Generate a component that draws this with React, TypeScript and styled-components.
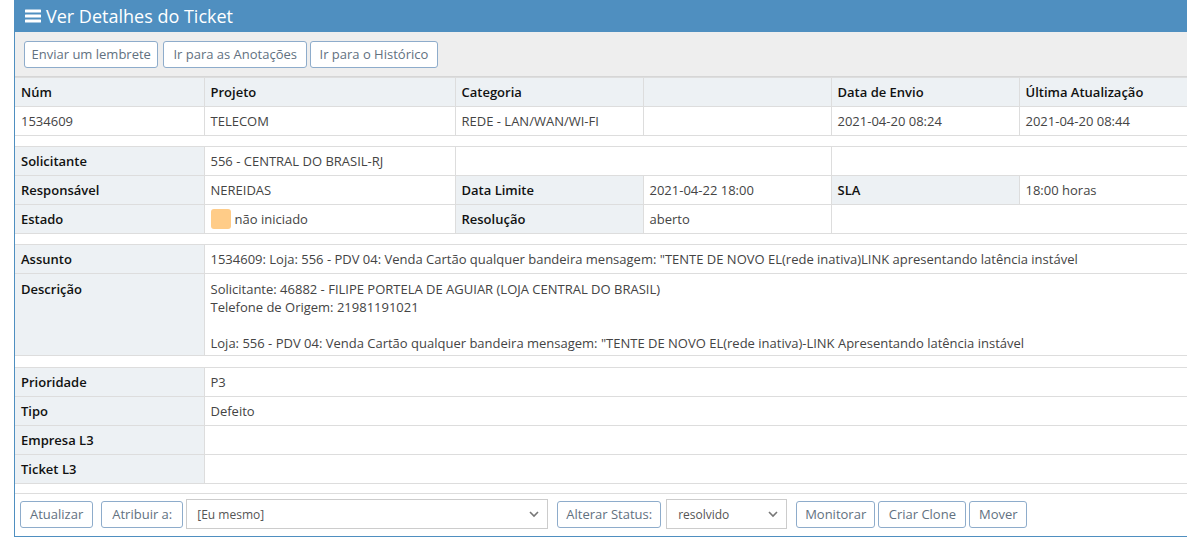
import React from 'react';
import styled, { createGlobalStyle } from 'styled-components';

const GlobalStyle = createGlobalStyle`
  html, body {
    margin: 0;
    padding: 0;
    background: #ffffff;
    overflow: hidden;
  }
  body {
    font-family: "Open Sans", "Noto Sans", Arial, sans-serif;
    font-size: 13px;
    color: #444;
  }
`;

const Page = styled.div`
  padding-left: 14px;
  width: 1220px;
`;

const Panel = styled.div`
  border-left: 1px solid #4f8fc0;
  border-bottom: 1px solid #4f8fc0;
  background: #fff;
`;

const Header = styled.div`
  height: 32px;
  background: #4f8fc0;
  color: #fff;
  display: flex;
  align-items: center;
  padding-left: 10px;
  font-size: 18px;
  gap: 5px;
`;

const Toolbar = styled.div`
  height: 45px;
  box-sizing: border-box;
  background: #eeeeee;
  border-bottom: 1px solid #d6d6d6;
  display: flex;
  align-items: center;
  padding-left: 9px;
`;

const Button = styled.button<{ $ml?: number; $px?: number }>`
  height: 27px;
  margin-left: ${({ $ml }) => $ml ?? 0}px;
  padding: 0 ${({ $px }) => $px ?? 8.5}px;
  background: #fff;
  border: 1px solid #8eaccb;
  border-radius: 3px;
  color: #62717f;
  font-family: "Open Sans", "Noto Sans", Arial, sans-serif;
  font-size: 13px;
  line-height: 1;
  white-space: nowrap;
  cursor: pointer;
`;

const Block = styled.table<{ $mt?: number }>`
  width: 100%;
  border-collapse: collapse;
  table-layout: fixed;
  margin-top: ${({ $mt }) => $mt ?? 0}px;
`;

const Cell = styled.td<{ $label?: boolean; $tall?: boolean }>`
  height: 28px;
  padding: ${({ $tall }) => ($tall ? '6px 6px 3px' : '0 6px')};
  border: 1px solid #dddddd;
  background: ${({ $label }) => ($label ? '#edf1f4' : '#fff')};
  color: ${({ $label }) => ($label ? '#111' : '#444')};
  font-weight: ${({ $label }) => ($label ? 600 : 400)};
  font-size: 13px;
  line-height: 18px;
  vertical-align: ${({ $tall }) => ($tall ? 'top' : 'middle')};
  white-space: nowrap;
  box-sizing: content-box;

  &:first-child {
    border-left: none;
  }
`;

const Swatch = styled.span`
  display: inline-block;
  width: 20px;
  height: 20px;
  border-radius: 3px;
  background: #ffcc88;
  vertical-align: -5px;
  margin-right: 4px;
`;

const Footer = styled.div`
  margin-top: 9px;
  border-top: 1px solid #dddddd;
  padding: 5px 0 7px 5px;
  display: flex;
  align-items: center;
`;

const SelectWrap = styled.div<{ $w: number; $ml: number }>`
  position: relative;
  width: ${({ $w }) => $w}px;
  margin-left: ${({ $ml }) => $ml}px;
  height: 30px;
`;

const Select = styled.select<{ $pl: number }>`
  appearance: none;
  width: 100%;
  height: 100%;
  border: 1px solid #cccccc;
  background: #fff;
  padding: 0 0 0 ${({ $pl }) => $pl}px;
  font-family: "Open Sans", "Noto Sans", Arial, sans-serif;
  font-size: 12px;
  color: #555;
  border-radius: 0;
`;

const Chevron = styled.svg`
  position: absolute;
  right: 9px;
  top: 12px;
  pointer-events: none;
`;

const Cols = () => (
  <colgroup>
    <col style={{ width: 189 }} />
    <col style={{ width: 251 }} />
    <col style={{ width: 188 }} />
    <col style={{ width: 188 }} />
    <col style={{ width: 188 }} />
    <col />
  </colgroup>
);

const Dropdown = ({ w, ml, pl, value }: { w: number; ml: number; pl: number; value: string }) => (
  <SelectWrap $w={w} $ml={ml}>
    <Select $pl={pl} defaultValue={value}>
      <option>{value}</option>
    </Select>
    <Chevron width="10" height="7" viewBox="0 0 10 7">
      <path d="M1 1l4 4 4-4" fill="none" stroke="#777" strokeWidth="1.6" />
    </Chevron>
  </SelectWrap>
);

const App = () => {
  return (
    <Page>
      <GlobalStyle />
      <Panel>
        <Header>
          <svg width="16" height="14" viewBox="0 0 16 14">
            <rect x="0" y="0.5" width="16" height="3" rx="0.5" fill="#fff" />
            <rect x="0" y="5.5" width="16" height="3" rx="0.5" fill="#fff" />
            <rect x="0" y="10.5" width="16" height="3" rx="0.5" fill="#fff" />
          </svg>
          Ver Detalhes do Ticket
        </Header>
        <Toolbar>
          <Button $px={6.5}>Enviar um lembrete</Button>
          <Button $px={9} $ml={5}>Ir para as Anotações</Button>
          <Button $px={8.5} $ml={3}>Ir para o Histórico</Button>
        </Toolbar>

        <Block>
          <Cols />
          <tbody>
            <tr>
              <Cell $label>Núm</Cell>
              <Cell $label>Projeto</Cell>
              <Cell $label>Categoria</Cell>
              <Cell $label></Cell>
              <Cell $label>Data de Envio</Cell>
              <Cell $label>Última Atualização</Cell>
            </tr>
            <tr>
              <Cell>1534609</Cell>
              <Cell>TELECOM</Cell>
              <Cell>REDE - LAN/WAN/WI-FI</Cell>
              <Cell></Cell>
              <Cell>2021-04-20 08:24</Cell>
              <Cell>2021-04-20 08:44</Cell>
            </tr>
          </tbody>
        </Block>

        <Block $mt={10}>
          <Cols />
          <tbody>
            <tr>
              <Cell $label>Solicitante</Cell>
              <Cell>556 - CENTRAL DO BRASIL-RJ</Cell>
              <Cell colSpan={2}></Cell>
              <Cell colSpan={2}></Cell>
            </tr>
            <tr>
              <Cell $label>Responsável</Cell>
              <Cell>NEREIDAS</Cell>
              <Cell $label>Data Limite</Cell>
              <Cell>2021-04-22 18:00</Cell>
              <Cell $label>SLA</Cell>
              <Cell>18:00 horas</Cell>
            </tr>
            <tr>
              <Cell $label>Estado</Cell>
              <Cell>
                <Swatch />
                não iniciado
              </Cell>
              <Cell $label>Resolução</Cell>
              <Cell>aberto</Cell>
              <Cell colSpan={2}></Cell>
            </tr>
          </tbody>
        </Block>

        <Block $mt={10}>
          <Cols />
          <tbody>
            <tr>
              <Cell $label>Assunto</Cell>
              <Cell colSpan={5}>
                1534609: Loja: 556 - PDV 04: Venda Cartão qualquer bandeira mensagem: "TENTE DE NOVO EL(rede inativa)LINK apresentando latência instável
              </Cell>
            </tr>
            <tr>
              <Cell $label $tall>Descrição</Cell>
              <Cell colSpan={5} $tall>
                Solicitante: 46882 - FILIPE PORTELA DE AGUIAR (LOJA CENTRAL DO BRASIL)
                <br />
                Telefone de Origem: 21981191021
                <br />
                <br />
                Loja: 556 - PDV 04: Venda Cartão qualquer bandeira mensagem: "TENTE DE NOVO EL(rede inativa)-LINK Apresentando latência instável
              </Cell>
            </tr>
          </tbody>
        </Block>

        <Block $mt={11}>
          <Cols />
          <tbody>
            <tr>
              <Cell $label>Prioridade</Cell>
              <Cell colSpan={5}>P3</Cell>
            </tr>
            <tr>
              <Cell $label>Tipo</Cell>
              <Cell colSpan={5}>Defeito</Cell>
            </tr>
            <tr>
              <Cell $label>Empresa L3</Cell>
              <Cell colSpan={5}></Cell>
            </tr>
            <tr>
              <Cell $label>Ticket L3</Cell>
              <Cell colSpan={5}></Cell>
            </tr>
          </tbody>
        </Block>

        <Footer>
          <Button $px={9}>Atualizar</Button>
          <Button $px={10} $ml={8}>Atribuir a:</Button>
          <Dropdown w={362} ml={3} pl={10} value="[Eu mesmo]" />
          <Button $px={8} $ml={9}>Alterar Status:</Button>
          <Dropdown w={121} ml={5} pl={11} value="resolvido" />
          <Button $px={8} $ml={9}>Monitorar</Button>
          <Button $px={9.5} $ml={3}>Criar Clone</Button>
          <Button $ml={3}>Mover</Button>
        </Footer>
      </Panel>
    </Page>
  );
};

export default App;
